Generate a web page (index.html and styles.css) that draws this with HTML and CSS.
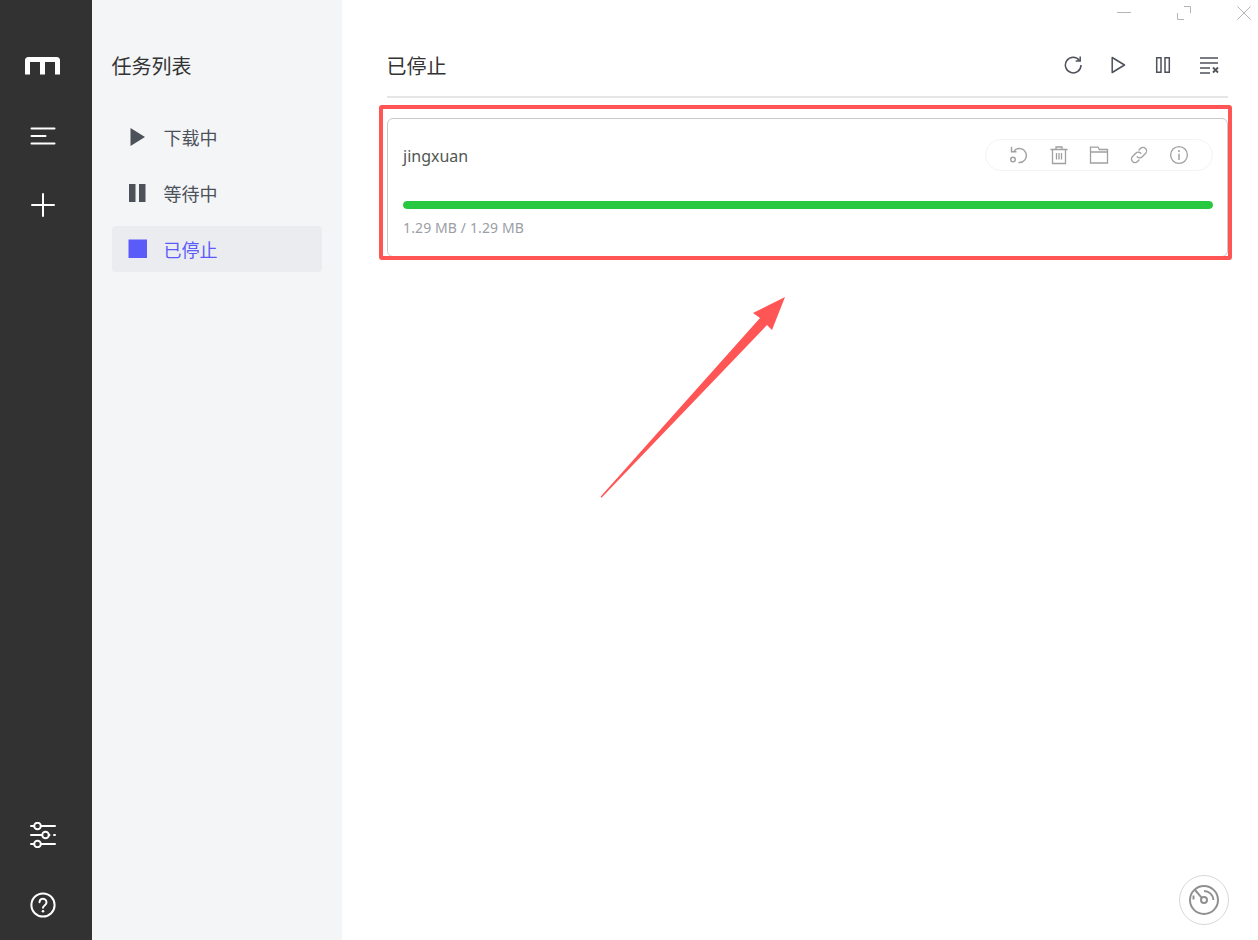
FILE: index.html
```html
<!DOCTYPE html>
<html lang="zh">
<head>
<meta charset="utf-8">
<title>任务列表</title>
<link rel="stylesheet" href="styles.css">
</head>
<body>
<div class="app">
  <aside class="rail">
    <svg class="rail-logo" width="35" height="18" viewBox="0 0 35 18"><path fill="#fff" d="M3.500 0H31.500a3.500 3.500 0 0 1 3.500 3.500V17.500H30V5H20V17.500H15V5H5V17.500H0V3.500a3.500 3.500 0 0 1 3.500-3.500Z"/></svg>
    <svg class="rail-icon rail-menu" width="26" height="18" viewBox="0 0 26 18"><path fill="none" stroke="#fff" stroke-width="2" stroke-linecap="round" d="M1.500 1.500H24.500M1.500 9H15.500M1.500 16.500H24.500"/></svg>
    <svg class="rail-icon rail-plus" width="24" height="24" viewBox="0 0 24 24"><path fill="none" stroke="#fff" stroke-width="2" stroke-linecap="round" d="M12 1V23M1 12H23"/></svg>
    <div class="rail-spacer"></div>
    <svg class="rail-icon rail-sliders" width="26" height="26" viewBox="0 0 26 26"><g fill="none" stroke="#fff" stroke-width="2"><path stroke-linecap="round" d="M1 4H3.500M11.500 4H25M1 13H11.500M19 13H19.500M24 13H25M1 22H3.500M11.500 22H25"/><circle cx="7.500" cy="4" r="3.300"/><circle cx="15.500" cy="13" r="3.300"/><circle cx="7.500" cy="22" r="3.300"/></g></svg>
    <svg class="rail-icon rail-help" width="26" height="26" viewBox="0 0 26 26"><circle cx="13" cy="13" r="11.600" fill="none" stroke="#fff" stroke-width="2"/><path fill="none" stroke="#fff" stroke-width="2" stroke-linecap="round" d="M9.500 10.200a3.500 3.500 0 1 1 5.600 2.800c-1.300 1-2.100 1.500-2.100 2.800"/><circle cx="13" cy="19.300" r="1.300" fill="#fff"/></svg>
  </aside>

  <nav class="subnav">
    <h2 class="subnav-title">任务列表</h2>
    <ul class="subnav-list">
      <li class="subnav-item">
        <svg class="subnav-icon" width="20" height="20" viewBox="0 0 20 20"><path fill="#4d515a" d="M2.500 1 17 10 2.500 19Z"/></svg>
        <span>下载中</span>
      </li>
      <li class="subnav-item">
        <svg class="subnav-icon" width="20" height="20" viewBox="0 0 20 20"><path fill="#4d515a" d="M1 1H7.500V19H1ZM11 1H17.500V19H11Z"/></svg>
        <span>等待中</span>
      </li>
      <li class="subnav-item is-active">
        <svg class="subnav-icon" width="20" height="20" viewBox="0 0 20 20"><rect x="0.500" y="0.500" width="18.500" height="18.500" fill="#5b5bfa"/></svg>
        <span>已停止</span>
      </li>
    </ul>
  </nav>

  <main class="content">
    <header class="content-head">
      <h1 class="content-title">已停止</h1>
      <div class="toolbar">
        <svg width="20" height="20" viewBox="1 0 20 20"><g fill="none" stroke="#4d515a" stroke-width="1.500"><path d="M16.500 5.500A7.800 7.800 0 1 0 18 10"/><path d="M17.200 1.500V6H12.700"/></g></svg>
        <svg width="20" height="20" viewBox="1 0 20 20"><path fill="none" stroke="#4d515a" stroke-width="1.500" stroke-linejoin="round" d="M4.200 2.500 16.500 10 4.200 17.500Z"/></svg>
        <svg width="20" height="20" viewBox="1 0 20 20"><path fill="none" stroke="#4d515a" stroke-width="1.500" d="M3.700 2.700H8V17.200H3.700ZM12 2.700H16.300V17.200H12Z"/></svg>
        <svg width="20" height="20" viewBox="0 0 20 20"><path fill="none" stroke="#4d515a" stroke-width="1.500" d="M1 3H19M1 8H19M1 13H11M1 18H11"/><path fill="none" stroke="#4d515a" stroke-width="1.800" d="M14 12.500 19 17.500M19 12.500 14 17.500"/></svg>
      </div>
    </header>

    <section class="task">
      <div class="task-top">
        <div class="task-name">jingxuan</div>
        <div class="task-actions">
          <svg width="20" height="20" viewBox="0 0 20 20"><g fill="none" stroke="#a0a0a0" stroke-width="1.400"><path d="M5 6A7 7 0 1 1 9.500 17.500"/><path d="M2.500 1.800V6.800H7.500"/><circle cx="4" cy="14.500" r="2.300"/></g></svg>
          <svg width="20" height="20" viewBox="0 0 20 20"><g fill="none" stroke="#a0a0a0" stroke-width="1.300"><path d="M1.500 4.500H18.500M7 4.500V2H13V4.500M3.500 4.500V18.500H16.500V4.500"/><path d="M7.500 8V14.500M10 8V14.500M12.500 8V14.500"/></g></svg>
          <svg width="20" height="20" viewBox="0 0 20 20"><path fill="none" stroke="#a0a0a0" stroke-width="1.300" d="M1.500 2.200H9L10.500 4.500H18.500V18H1.500ZM1.500 7H18.500"/></svg>
          <svg width="20" height="20" viewBox="0 0 20 20"><g fill="none" stroke="#a0a0a0" stroke-width="1.300" stroke-linecap="round"><path d="M8.200 11.800a3.500 3.500 0 0 0 5 0l3.300-3.300a3.500 3.500 0 0 0-5-5L10 5"/><path d="M11.800 8.200a3.500 3.500 0 0 0-5 0l-3.300 3.300a3.500 3.500 0 0 0 5 5L10 15"/></g></svg>
          <svg width="20" height="20" viewBox="0 0 20 20"><circle cx="10" cy="10" r="8.400" fill="none" stroke="#a0a0a0" stroke-width="1.300"/><path fill="none" stroke="#a0a0a0" stroke-width="1.500" d="M10 8.800V15"/><circle cx="10" cy="5.900" r="1" fill="#a0a0a0"/></svg>
        </div>
      </div>
      <div class="progress"><div class="progress-fill" style="width: 100%"></div></div>
      <div class="task-size">1.29 MB / 1.29 MB</div>
    </section>

    <button class="speed-btn" type="button" aria-label="speed">
      <svg width="32" height="32" viewBox="0 0 32 32"><g fill="none" stroke="#909090" stroke-width="2"><circle cx="16" cy="16" r="14"/><path d="M16 7A9.500 9.500 0 0 1 25.500 16"/><path d="M5.500 11.500V15.500"/><path d="M7 6 13.800 13.800"/><circle cx="16" cy="16" r="3"/></g></svg>
    </button>

    <div class="window-controls">
      <svg width="14" height="14" viewBox="0 0 14 14"><path stroke="#b5b5b5" stroke-width="1" d="M0 6.500H14"/></svg>
      <svg width="14" height="14" viewBox="0 0 14 14"><path fill="none" stroke="#b5b5b5" stroke-width="1" d="M.5 7V13.500H7M7 .5H13.500V7"/></svg>
      <svg width="14" height="14" viewBox="0 0 14 14"><path stroke="#b5b5b5" stroke-width="1" d="M.5.5 13.500 13.500M13.500.5.500 13.500"/></svg>
    </div>
  </main>
</div>

<div class="callout-box"></div>
<svg class="callout-arrow" width="1258" height="940" viewBox="0 0 1258 940"><polygon fill="#ff5555" points="600.500,496.800 760,318 753,313 785,297 772,330 767,325 601.500,497.800"/></svg>
</body>
</html>
```

FILE: styles.css
```css
* { box-sizing: border-box; }
html, body { margin: 0; height: 100%; }
body {
  font-family: "Noto Sans", "Noto Sans CJK SC", sans-serif;
  color: #333;
  background: #fff;
  overflow: hidden;
}
.app { display: flex; height: 940px; }

.rail {
  width: 92px;
  flex: none;
  background: #323232;
  display: flex;
  flex-direction: column;
  align-items: center;
  padding: 57px 7px 22px 0;
}
.rail-icon, .rail-logo { display: block; flex: none; }
.rail-menu { margin-top: 52px; }
.rail-plus { margin-top: 48px; }
.rail-spacer { flex: 1; }
.rail-help { margin-top: 44px; }

.subnav {
  width: 250px;
  flex: none;
  background: #f4f5f7;
  padding: 0 20px;
}
.subnav-title {
  margin: 0 0 0 -0.5px;
  height: 114px;
  padding-top: 52px;
  font-size: 20px;
  font-weight: 400;
  line-height: 30px;
  color: #333;
}
.subnav-list { list-style: none; margin: 0; padding: 0; display: flex; flex-direction: column; gap: 10px; }
.subnav-item {
  height: 46px;
  display: flex;
  align-items: center;
  gap: 15.5px;
  padding-left: 16px;
  border-radius: 4px;
  font-size: 18px;
  color: #4d515a;
}
.subnav-icon { flex: none; }
.subnav-item.is-active { background: #ebecf0; color: #5b5bfa; }

.content {
  flex: 1;
  position: relative;
  padding: 0 30px 0 45px;
}
.content-head {
  height: 98px;
  padding-top: 37px;
  border-bottom: 2px solid #e6e6e6;
  display: flex;
  align-items: flex-start;
  justify-content: space-between;
}
.content-title {
  margin: 0 0 0 -0.5px;
  font-size: 20px;
  font-weight: 400;
  line-height: 60px;
  color: #333;
}
.toolbar {
  display: flex;
  gap: 25px;
  padding: 18px 9px 0 0;
}
.toolbar svg { display: block; }

.task {
  margin-top: 20px;
  height: 139px;
  border: 1px solid #c9c9c9;
  border-radius: 6px;
  padding: 20px 14px 0 15px;
}
.task-top { display: flex; align-items: center; justify-content: space-between; height: 32px; }
.task-name { font-size: 16px; color: #505753; line-height: 32px; padding-top: 2px; }
.task-actions {
  display: flex;
  align-items: center;
  gap: 20px;
  height: 32px;
  padding: 0 23px;
  border: 1px solid #f3f3f3;
  border-radius: 16px;
}
.task-actions svg { display: block; }
.progress {
  margin-top: 30px;
  height: 8px;
  border-radius: 4px;
  background: #e8e8e8;
  overflow: hidden;
}
.progress-fill { height: 100%; background: #28c840; border-radius: 4px; }
.task-size {
  margin-top: 9px;
  font-size: 14px;
  line-height: 20px;
  letter-spacing: 0.12px;
  color: #9b9ea5;
}

.speed-btn {
  position: absolute;
  right: 29px;
  bottom: 15px;
  width: 50px;
  height: 50px;
  padding: 0;
  border: 1px solid #d8d8d8;
  border-radius: 50%;
  background: #fff;
  display: flex;
  align-items: center;
  justify-content: center;
}
.speed-btn svg { display: block; }

.window-controls {
  position: absolute;
  top: 6px;
  right: 7px;
  display: flex;
  gap: 46px;
}
.window-controls svg { display: block; }

.callout-box {
  position: absolute;
  left: 379px;
  top: 105px;
  width: 853px;
  height: 155px;
  border: 4.500px solid #ff5555;
  border-radius: 3px;
}
.callout-arrow { position: absolute; left: 0; top: 0; pointer-events: none; }
```
